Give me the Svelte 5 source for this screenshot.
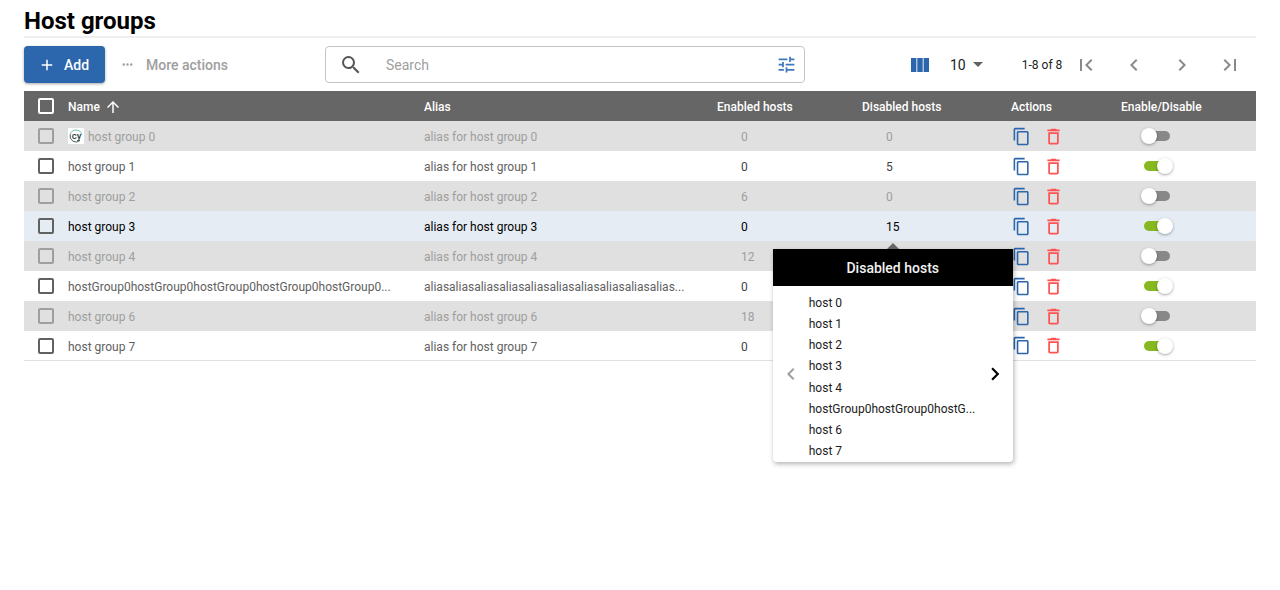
<script>
	const longName = 'hostGroup0hostGroup0hostGroup0hostGroup0hostGroup0...';
	const longAlias = 'aliasaliasaliasaliasaliasaliasaliasaliasaliasalias...';

	const rows = [
		{ name: 'host group 0', alias: 'alias for host group 0', enabled: 0, disabled: 0, on: false, logo: true },
		{ name: 'host group 1', alias: 'alias for host group 1', enabled: 0, disabled: 5, on: true },
		{ name: 'host group 2', alias: 'alias for host group 2', enabled: 6, disabled: 0, on: false },
		{ name: 'host group 3', alias: 'alias for host group 3', enabled: 0, disabled: 15, on: true, active: true },
		{ name: 'host group 4', alias: 'alias for host group 4', enabled: 12, disabled: 0, on: false },
		{ name: longName, alias: longAlias, enabled: 0, disabled: 25, on: true },
		{ name: 'host group 6', alias: 'alias for host group 6', enabled: 18, disabled: 0, on: false },
		{ name: 'host group 7', alias: 'alias for host group 7', enabled: 0, disabled: 35, on: true }
	];

	const hosts = ['host 0', 'host 1', 'host 2', 'host 3', 'host 4', 'hostGroup0hostGroup0hostG...', 'host 6', 'host 7'];
</script>

<div class="page">
	<h1>Host groups</h1>

	<div class="toolbar">
		<button class="add">
			<svg width="18" height="18" viewBox="0 0 24 24"><path d="M19 13h-6v6h-2v-6H5v-2h6V5h2v6h6v2z" /></svg>
			Add
		</button>
		<div class="more">
			<svg width="18" height="18" viewBox="0 0 24 24"><path d="M6 10a2 2 0 1 0 0 4 2 2 0 0 0 0-4zm6 0a2 2 0 1 0 0 4 2 2 0 0 0 0-4zm6 0a2 2 0 1 0 0 4 2 2 0 0 0 0-4z" /></svg>
			More actions
		</div>

		<div class="search">
			<svg class="glass" width="24" height="24" viewBox="0 0 24 24"><path d="M15.5 14h-.79l-.28-.27A6.47 6.47 0 0 0 16 9.5 6.5 6.5 0 1 0 9.5 16c1.61 0 3.09-.59 4.23-1.57l.27.28v.79l5 4.99L20.49 19l-4.99-5zm-6 0C7.01 14 5 11.99 5 9.5S7.01 5 9.5 5 14 7.01 14 9.5 11.99 14 9.5 14z" /></svg>
			<span class="placeholder">Search</span>
			<svg class="tune" width="21" height="21" viewBox="0 0 24 24"><path d="M3 17v2h6v-2H3zM3 5v2h10V5H3zm10 16v-2h8v-2h-8v-2h-2v6h2zM7 9v2H3v2h4v2h2V9H7zm14 4v-2H11v2h10zm-6-4h2V7h4V5h-4V3h-2v6z" /></svg>
		</div>

		<div class="pager">
			<svg class="cols" width="18" height="14" viewBox="0 0 18 14"><path d="M0 0h5.4v14H0zM6.3 0h5.4v14H6.3zM12.6 0H18v14h-5.4z" /></svg>
			<span class="size">10</span>
			<span class="caret"></span>
			<span class="range">1-8 of 8</span>
			<div class="nav">
				<svg width="24" height="24" viewBox="0 0 24 24"><path d="M18.41 16.59L13.82 12l4.59-4.59L17 6l-6 6 6 6zM6 6h2v12H6z" /></svg>
				<svg width="24" height="24" viewBox="0 0 24 24"><path d="M15.41 7.41L14 6l-6 6 6 6 1.41-1.41L10.83 12z" /></svg>
				<svg width="24" height="24" viewBox="0 0 24 24"><path d="M10 6L8.59 7.41 13.17 12l-4.58 4.59L10 18l6-6z" /></svg>
				<svg width="24" height="24" viewBox="0 0 24 24"><path d="M5.59 7.41L10.18 12l-4.59 4.59L7 18l6-6-6-6zM16 6h2v12h-2z" /></svg>
			</div>
		</div>
	</div>

	<div class="table">
		<div class="row head">
			<div class="check"><span class="box"></span></div>
			<div class="name-head txt">
				Name
				<svg width="18" height="18" viewBox="0 0 24 24"><path d="M4 12l1.41 1.41L11 7.83V20h2V7.83l5.58 5.59L20 12l-8-8-8 8z" /></svg>
			</div>
			<div class="txt">Alias</div>
			<div class="txt">Enabled hosts</div>
			<div class="txt">Disabled hosts</div>
			<div class="txt">Actions</div>
			<div class="txt">Enable/Disable</div>
		</div>

		{#each rows as row}
			<div class="row" class:off={!row.on} class:active={row.active}>
				<div class="check"><span class="box"></span></div>
				<div class="name txt">
					{#if row.logo}
						<span class="logo">
							<svg width="16" height="16" viewBox="0 0 16 16">
								<path d="M2.2 6.5A6 6 0 0 1 13.8 6.5" fill="none" stroke="#5cb89a" stroke-width="0.9" />
								<path d="M12 12.5A6 6 0 0 1 2.2 6.5" fill="none" stroke="#2b4a48" stroke-width="0.9" />
								<text x="8.6" y="10.6" text-anchor="middle">cy</text>
							</svg>
						</span>
					{/if}
					{row.name}
				</div>
				<div class="alias txt">{row.alias}</div>
				<div class="count txt">{row.enabled}</div>
				<div class="count txt">
					{#if row.active}
						<span class="anchor">
							{row.disabled}
							<div class="popover">
								<div class="pop-title">Disabled hosts</div>
								<div class="pop-body">
									<svg class="arrow prev" width="24" height="24" viewBox="0 0 24 24"><path d="M15.41 7.41L14 6l-6 6 6 6 1.41-1.41L10.83 12z" /></svg>
									<ul>
										{#each hosts as host}
											<li>{host}</li>
										{/each}
									</ul>
									<svg class="arrow next" width="26" height="26" viewBox="0 0 24 24"><path d="M10 6L8.59 7.41 13.17 12l-4.58 4.59L10 18l6-6z" /></svg>
								</div>
							</div>
						</span>
					{:else}
						{row.disabled}
					{/if}
				</div>
				<div class="actions">
					<svg class="copy" width="19" height="19" viewBox="0 0 24 24"><path d="M16 1H4c-1.1 0-2 .9-2 2v14h2V3h12V1zm3 4H8c-1.1 0-2 .9-2 2v14c0 1.1.9 2 2 2h11c1.1 0 2-.9 2-2V7c0-1.1-.9-2-2-2zm0 16H8V7h11v14z" /></svg>
					<svg class="trash" width="21" height="21" viewBox="0 0 24 24"><path d="M6 19c0 1.1.9 2 2 2h8c1.1 0 2-.9 2-2V7H6v12zM8 9h8v10H8V9zm7.5-5l-1-1h-5l-1 1H5v2h14V4z" /></svg>
				</div>
				<div class="toggle-cell">
					<span class="toggle" class:on={row.on}><span class="thumb"></span></span>
				</div>
			</div>
		{/each}
	</div>
</div>

<style>
	:global(body) {
		margin: 0;
		background: #fff;
	}
	.page {
		min-height: 100vh;
		box-sizing: border-box;
		padding: 0 24px;
		font-family: Roboto, 'Liberation Sans', sans-serif;
		font-size: 12px;
	}
	h1 {
		margin: 0;
		padding: 7px 0 1px;
		height: 28px;
		line-height: 28px;
		font-size: 24px;
		font-weight: 700;
		color: #000;
		border-bottom: 2px solid #eee;
	}
	.toolbar {
		display: flex;
		align-items: center;
		height: 37px;
		margin-top: 8px;
	}
	.add {
		display: flex;
		align-items: center;
		gap: 8px;
		width: 81px;
		height: 37px;
		padding: 0 0 0 14px;
		border: 0;
		border-radius: 4px;
		background: #2c66ac;
		color: #fff;
		font: 500 14px Roboto, sans-serif;
		box-shadow: 0 1px 3px rgba(0, 0, 0, 0.35);
	}
	.add svg {
		fill: #fff;
	}
	.more {
		display: flex;
		align-items: center;
		gap: 11px;
		width: 220px;
		padding-left: 15px;
		box-sizing: border-box;
		color: #9e9e9e;
		font-size: 14px;
		font-weight: 500;
	}
	.more svg {
		fill: #9e9e9e;
		width: 15px;
		height: 15px;
	}
	.search {
		display: flex;
		align-items: center;
		width: 480px;
		height: 37px;
		box-sizing: border-box;
		padding: 0 7px 0 13px;
		border: 1px solid #c4c4c4;
		border-radius: 4px;
	}
	.glass {
		fill: #555;
	}
	.placeholder {
		flex: 1;
		margin-left: 23px;
		color: #9e9e9e;
		font-size: 14px;
	}
	.tune {
		fill: #3f78bd;
	}
	.pager {
		display: flex;
		align-items: center;
		margin-left: 106px;
		color: #212121;
	}
	.cols {
		fill: #2c66ac;
	}
	.size {
		margin-left: 21px;
		font-size: 14px;
	}
	.caret {
		margin-left: 7px;
		border: 5px solid transparent;
		border-top-color: #616161;
		border-bottom-width: 0;
	}
	.range {
		margin-left: 39px;
	}
	.nav {
		display: flex;
		gap: 24px;
		margin-left: 12px;
	}
	.nav svg {
		fill: #8a8a8a;
	}
	.table {
		margin-top: 8px;
	}
	.row {
		display: grid;
		grid-template-columns: 44px 356px 293px 145px 149px 110px 135px;
		align-items: center;
		box-sizing: border-box;
		height: 30px;
		background: #fff;
		color: #616161;
	}
	.row:last-child {
		border-bottom: 1px solid #e0e0e0;
	}
	.row.off {
		background: #e0e0e0;
		color: #9e9e9e;
	}
	.row.active {
		background: #e5ecf4;
		color: #000;
	}
	.head {
		background: #666;
		color: #fff;
		font-weight: 500;
	}
	.txt {
		padding-top: 2px;
	}
	.check {
		padding-left: 14px;
		display: flex;
	}
	.box {
		width: 16px;
		height: 16px;
		box-sizing: border-box;
		border: 2px solid #616161;
		border-radius: 2px;
	}
	.off .box {
		border-color: #9e9e9e;
	}
	.head .box {
		border-color: #fff;
	}
	.name-head {
		display: flex;
		align-items: center;
		gap: 4px;
	}
	.name-head svg {
		fill: #fff;
		margin-top: -1px;
	}
	.name {
		display: flex;
		align-items: center;
		gap: 4px;
		white-space: nowrap;
	}
	.logo {
		display: flex;
		width: 16px;
		height: 16px;
		background: #fff;
		margin-top: -2px;
	}
	.logo text {
		font: 500 9.5px Roboto, sans-serif;
		fill: #1d3b3a;
	}
	.alias {
		white-space: nowrap;
	}
	.count {
		padding-left: 24px;
	}
	.row:not(.off):not(.active) .count {
		color: #424242;
	}
	.anchor {
		position: relative;
		display: inline-block;
	}
	.anchor::after {
		content: '';
		position: absolute;
		left: 50%;
		top: 23px;
		margin-left: -6px;
		z-index: 3;
		border: 6px solid transparent;
		border-top: 0;
		border-bottom-color: #666;
	}
	.popover {
		position: absolute;
		left: 50%;
		top: 29px;
		z-index: 2;
		width: 240px;
		margin-left: -120px;
		background: #fff;
		border-radius: 0 0 4px 4px;
		box-shadow: 1px 2px 5px rgba(0, 0, 0, 0.3);
	}
	.pop-title {
		height: 37px;
		line-height: 39px;
		background: #000;
		color: #f2f2f2;
		text-align: center;
		font-size: 14px;
		font-weight: 500;
	}
	.pop-body {
		display: flex;
		align-items: center;
		height: 176px;
		padding: 0 6px;
		box-sizing: border-box;
	}
	.pop-body ul {
		flex: 1;
		align-self: flex-start;
		margin: 0;
		padding: 7px 0 0 6px;
		list-style: none;
		color: #212121;
		white-space: nowrap;
	}
	.pop-body li {
		height: 21.15px;
		line-height: 21px;
	}
	.arrow {
		fill: #000;
		flex: none;
	}
	.arrow.prev {
		fill: #9e9e9e;
	}
	.arrow.next {
		margin: 0 -1px;
	}
	.actions {
		display: flex;
		align-items: center;
		gap: 12px;
		padding-left: 1px;
	}
	.copy {
		fill: #2c66ac;
	}
	.trash {
		fill: #ff5252;
	}
	.toggle-cell {
		padding-left: 23px;
	}
	.toggle {
		position: relative;
		display: block;
		width: 26px;
		height: 10px;
		border-radius: 5px;
		background: #888;
	}
	.toggle.on {
		background: #86b81f;
	}
	.thumb {
		position: absolute;
		left: -3px;
		top: -3px;
		width: 16px;
		height: 16px;
		border-radius: 50%;
		background: #fff;
		box-shadow: 0 1px 3px rgba(0, 0, 0, 0.35);
	}
	.toggle.on .thumb {
		left: 13px;
	}
</style>
